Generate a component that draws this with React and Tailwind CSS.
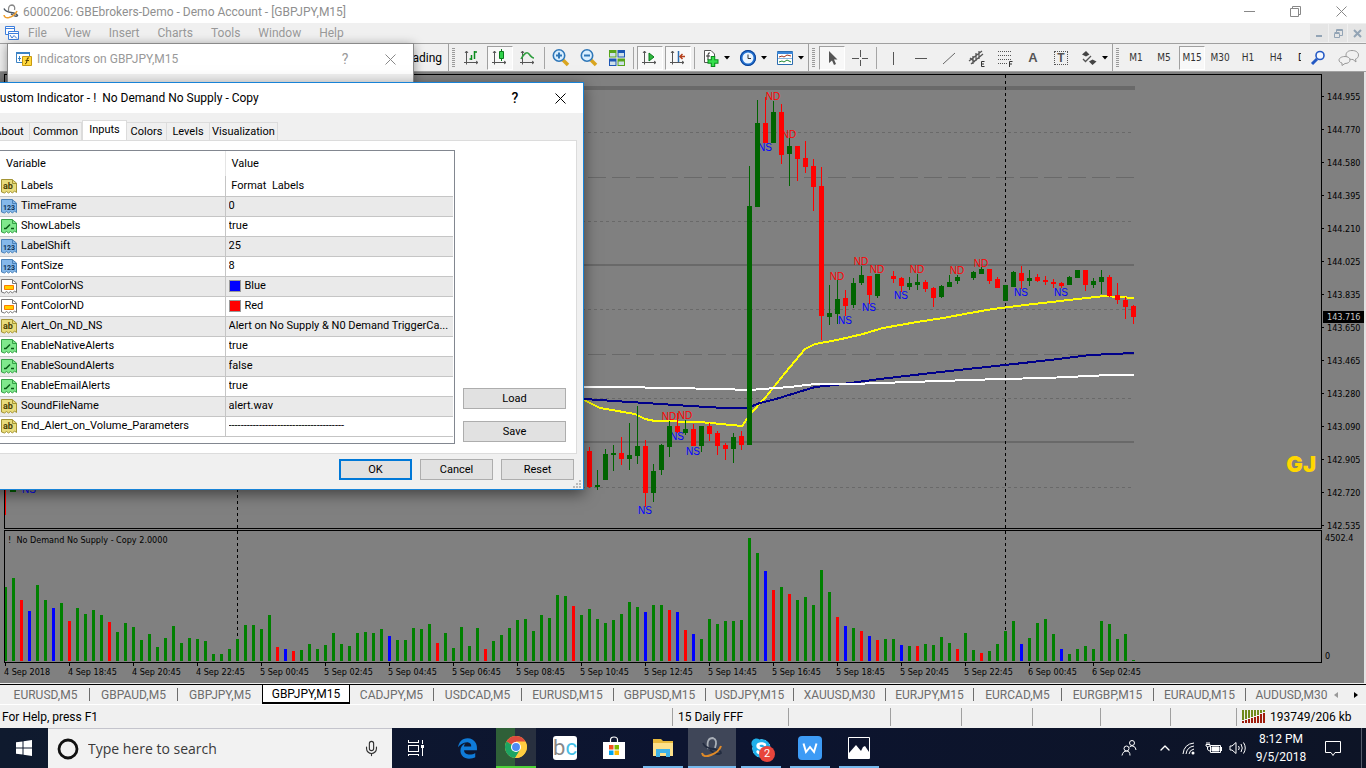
import { ChevronUp, Mic } from "lucide-react";
import { FaEdgeLegacy, FaSkype } from "react-icons/fa6";

// --- Data ---
const G = "#008000";
const R = "#ff0000";
const B = "#0000ff";
const BAR_COLORS = { g: G, r: R, b: B };
const FIRST_X = 5;
const STEP = 8;

const volumes =
  "g74 g83 r61 b50 g76 g61 b53 g58 r40 g53 g47 g51 g46 r39 g29 g38 g34 g21 g27 g14 g23 g35 g18 g23 g22 g20 g7 g7 g12 g22 " +
  "g36 g36 g32 g46 r14 b12 r10 g11 g17 g12 g16 g28 g17 g15 g28 g29 g28 g32 b25 g21 g21 g33 g32 g37 r18 g28 g13 g34 g15 g33 " +
  "r12 g20 g26 g33 g41 g42 g30 g46 g43 g66 g65 r55 g46 g52 g42 g38 g41 g47 g59 g54 b49 g56 g56 r51 b49 r31 b27 g22 g42 g37 " +
  "g40 g40 g41 g123 g108 b90 r71 g74 r67 g61 g64 g56 g91 g69 r44 b35 g33 r30 b25 r21 g22 g22 b16 g15 r15 g17 g16 g24 g18 r12 " +
  "g28 g11 r8 g10 g17 g30 g40 b17 g23 g38 g42 g27 b12 g7 g12 g15 g12 g40 g37 g22 g27 g1";

// [index, up/down, high, body top, body bottom, low]
const candles = [
  [73, 0, 447, 451, 487, 488], [74, 1, 470, 485, 487, 490], [75, 1, 449, 454, 480, 480], [76, 1, 445, 453, 455, 471],
  [77, 0, 437, 453, 459, 465], [78, 1, 423, 455, 459, 470], [79, 1, 406, 446, 456, 464], [80, 0, 440, 446, 493, 507],
  [81, 1, 464, 471, 493, 502], [82, 1, 444, 445, 470, 475], [83, 1, 421, 426, 447, 457], [84, 0, 413, 426, 432, 433],
  [85, 1, 420, 429, 433, 435], [86, 0, 424, 429, 446, 446], [87, 1, 426, 426, 446, 452], [88, 0, 423, 426, 434, 441],
  [89, 0, 431, 433, 446, 455], [90, 0, 443, 445, 449, 460], [91, 1, 433, 437, 449, 463], [92, 0, 431, 436, 445, 450],
  [93, 1, 166, 206, 445, 445], [94, 1, 100, 123, 207, 207], [95, 0, 97, 123, 143, 143], [96, 1, 101, 112, 143, 143],
  [97, 0, 104, 112, 155, 164], [98, 1, 138, 146, 154, 186], [99, 0, 146, 146, 159, 181], [100, 0, 141, 158, 167, 173],
  [101, 0, 159, 166, 187, 211], [102, 0, 167, 186, 316, 340], [103, 1, 285, 313, 317, 325], [104, 1, 280, 299, 314, 324],
  [105, 0, 290, 298, 306, 316], [106, 1, 278, 283, 305, 308], [107, 1, 266, 275, 283, 285], [108, 0, 276, 276, 295, 304],
  [109, 1, 274, 274, 296, 298], [111, 0, 271, 276, 279, 283], [112, 0, 277, 278, 286, 292], [113, 1, 277, 283, 287, 290],
  [114, 1, 274, 282, 285, 290], [115, 0, 280, 282, 289, 292], [116, 0, 287, 288, 298, 307], [117, 1, 285, 286, 297, 298],
  [118, 1, 275, 282, 287, 287], [119, 1, 275, 277, 281, 284], [121, 1, 271, 272, 278, 280], [122, 1, 267, 269, 274, 274],
  [123, 0, 269, 269, 281, 284], [124, 0, 277, 279, 288, 288], [125, 1, 285, 285, 301, 301], [126, 1, 271, 272, 287, 287],
  [127, 0, 266, 273, 281, 289], [128, 1, 270, 278, 281, 286], [129, 0, 274, 277, 281, 282], [130, 0, 276, 280, 282, 285],
  [131, 0, 279, 282, 284, 288], [132, 0, 282, 283, 286, 288], [133, 1, 276, 277, 285, 285], [134, 1, 270, 270, 278, 278],
  [135, 0, 270, 270, 285, 291], [136, 1, 278, 281, 285, 288], [137, 1, 270, 277, 282, 294], [138, 0, 275, 277, 296, 297],
  [139, 0, 283, 295, 300, 304], [140, 0, 297, 300, 307, 319], [141, 0, 305, 306, 317, 324],
];

const signals = [
  ["ND", 773, 96], ["ND", 789, 134], ["ND", 837, 276], ["ND", 861, 261], ["ND", 877, 269], ["ND", 917, 269],
  ["ND", 957, 270], ["ND", 981, 263], ["ND", 669, 416], ["ND", 685, 415],
  ["NS", 765, 147], ["NS", 845, 320], ["NS", 869, 307], ["NS", 901, 295], ["NS", 1021, 292], ["NS", 1061, 292],
  ["NS", 677, 436], ["NS", 693, 451], ["NS", 645, 510], ["NS", 29, 489],
];

const prices = ["144.955", "144.770", "144.580", "144.395", "144.210", "144.025", "143.835", "143.650", "143.465", "143.280", "143.090", "142.905", "142.720", "142.535"];

const times = ["4 Sep 2018", "4 Sep 18:45", "4 Sep 20:45", "4 Sep 22:45", "5 Sep 00:45", "5 Sep 02:45", "5 Sep 04:45", "5 Sep 06:45", "5 Sep 08:45", "5 Sep 10:45", "5 Sep 12:45", "5 Sep 14:45", "5 Sep 16:45", "5 Sep 18:45", "5 Sep 20:45", "5 Sep 22:45", "6 Sep 00:45", "6 Sep 02:45"];

const chartTabs = [
  ["EURUSD,M5", "w-[88px]"], ["GBPAUD,M5", "w-[88px]"], ["GBPJPY,M5", "w-[84px]"], ["GBPJPY,M15", "w-[88px]"], ["CADJPY,M5", "w-[84px]"],
  ["USDCAD,M5", "w-[88px]"], ["EURUSD,M15", "w-[92px]"], ["GBPUSD,M15", "w-[92px]"], ["USDJPY,M15", "w-[88px]"], ["XAUUSD,M30", "w-[92px]"],
  ["EURJPY,M15", "w-[88px]"], ["EURCAD,M5", "w-[88px]"], ["EURGBP,M15", "w-[92px]"], ["EURAUD,M15", "w-[92px]"], ["AUDUSD,M30", "w-[92px]"],
];

const inputs = [
  ["ab", "Labels", " Format  Labels"],
  ["123", "TimeFrame", "0"],
  ["bool", "ShowLabels", "true"],
  ["123", "LabelShift", "25"],
  ["123", "FontSize", "8"],
  ["color", "FontColorNS", "Blue"],
  ["color", "FontColorND", "Red"],
  ["ab", "Alert_On_ND_NS", "Alert on No Supply & N0 Demand TriggerCa..."],
  ["bool", "EnableNativeAlerts", "true"],
  ["bool", "EnableSoundAlerts", "false"],
  ["bool", "EnableEmailAlerts", "true"],
  ["ab", "SoundFileName", "alert.wav"],
  ["ab", "End_Alert_on_Volume_Parameters", "--------------------------------------"],
];

const UI = "font-['Roboto','Noto_Sans',sans-serif]";
const CHART = "font-['DejaVu_Sans_Condensed','DejaVu_Sans',sans-serif]";

// --- Title bar and menu ---
function TitleBar() {
  return (
    <header className="flex h-[23px] shrink-0 items-center bg-white text-[#8f8f8f]">
      <svg className="ml-[3px] size-4" viewBox="0 0 16 16" fill="none">
        <path d="M5.500 7Q5 1 9 1Q12.500 1.500 11.500 6" stroke="#888" strokeWidth="1.300" />
        <path d="M1 4.500Q2 7.500 8 8.500Q14 9.500 14.500 11.500Q13 13.500 8 10" stroke="#4a5460" strokeWidth="1.400" />
        <path d="M1 11Q1.500 14.500 6 13.500Q11.500 12 14 7" stroke="#f0a030" strokeWidth="1.600" />
      </svg>
      <span className="ml-1 text-xs">6000206: GBEbrokers-Demo - Demo Account - [GBPJPY,M15]</span>
      <div className="mr-[2px] ml-auto flex">
        <button aria-label="Minimize" className="flex h-[22px] w-[46px] items-center justify-center">
          <svg width="11" height="11" stroke="#888" fill="none"><path d="M0 5.500H11" /></svg>
        </button>
        <button aria-label="Restore" className="flex h-[22px] w-[46px] items-center justify-center">
          <svg width="11" height="11" stroke="#888" fill="none"><path d="M0.500 2.500H8.500V10.500H0.500ZM2.500 2.500V0.500H10.500V8.500H8.500" /></svg>
        </button>
        <button aria-label="Close" className="flex h-[22px] w-[46px] items-center justify-center">
          <svg width="11" height="11" stroke="#888" fill="none"><path d="M0.500 0.500L10.500 10.500M10.500 0.500L0.500 10.500" /></svg>
        </button>
      </div>
    </header>
  );
}

function MenuBar() {
  return (
    <nav className="flex h-5 shrink-0 items-center bg-[#f0f0f0] text-xs text-[#999]">
      <svg className="ml-[5px] mr-[3px] size-[15px]" viewBox="0 0 15 15" fill="none" stroke="#3e7fdc">
        <path d="M0.500 0.500H9.500V8.500H0.500ZM0.500 2.500H9.500" fill="#fff" />
        <path d="M3.500 5.500H13.500V13.500H3.500ZM3.500 7.500H13.500" fill="#fff" />
        <path d="M5 9L7 12L9 9.500L12 12.500" />
      </svg>
      <button className="px-[5px] mr-2">File</button>
      <button className="px-[5px] mr-2">View</button>
      <button className="px-[5px] mr-2">Insert</button>
      <button className="px-[5px] mr-2">Charts</button>
      <button className="px-[5px] mr-2">Tools</button>
      <button className="px-[5px] mr-2">Window</button>
      <button className="px-[5px]">Help</button>
      <div className="ml-auto flex gap-px">
        <button aria-label="Minimize chart" className="flex h-[18px] w-[18px] items-center justify-center bg-[#e5e5e5]">
          <svg width="9" height="9"><path d="M1 7H7" stroke="#93a4b5" strokeWidth="2" /></svg>
        </button>
        <button aria-label="Restore chart" className="flex h-[18px] w-[18px] items-center justify-center bg-[#e5e5e5]">
          <svg width="9" height="9" fill="none" stroke="#93a4b5"><path d="M0.500 4.500H5.500V8.500H0.500ZM0.500 3.500H5.500M2.500 3V0.500H8.500V6.500H6M2.500 1.500H8.500" /></svg>
        </button>
        <button aria-label="Close chart" className="flex h-[18px] w-[18px] items-center justify-center bg-[#e5e5e5]">
          <svg width="9" height="9"><path d="M1 1L8 8M8 1L1 8" stroke="#93a4b5" strokeWidth="2" /></svg>
        </button>
      </div>
    </nav>
  );
}

// --- Toolbar ---
const AXES = "M4.500 3V16.500M2 14.500H16M3 5L4.500 3L6 5M14 13L16 14.500L14 16";

const toolIcons = {
  bars: (
    <>
      <path d={AXES} stroke="#555" />
      <path d="M9.500 7V12M7.500 11H10M12.500 3V11M12 4H15" stroke="#0a8a1c" strokeWidth="1.500" />
    </>
  ),
  candles: (
    <>
      <path d={AXES} stroke="#555" />
      <path d="M11.500 1V13" stroke="#0a7a1c" />
      <path d="M9.500 3.500H13.500V10.500H9.500Z" fill="#2fd14a" stroke="#0a7a1c" />
    </>
  ),
  line: (
    <>
      <path d={AXES} stroke="#555" />
      <path d="M3 11Q8 2 11 6T16 10" stroke="#2f9e3f" strokeWidth="1.500" />
    </>
  ),
  zoomin: (
    <>
      <path d="M12 12L17 17" stroke="#d9a520" strokeWidth="3.500" />
      <circle cx="8" cy="7.500" r="5.700" fill="#d9efff" stroke="#2f77b8" strokeWidth="1.600" />
      <path d="M5 7.500H11M8 4.500V10.500" stroke="#2f77b8" strokeWidth="2" />
    </>
  ),
  zoomout: (
    <>
      <path d="M12 12L17 17" stroke="#d9a520" strokeWidth="3.500" />
      <circle cx="8" cy="7.500" r="5.700" fill="#d9efff" stroke="#2f77b8" strokeWidth="1.600" />
      <path d="M5 7.500H11" stroke="#2f77b8" strokeWidth="2" />
    </>
  ),
  tiles: (
    <>
      <path d="M2 2H9.500V9.500H2ZM10.500 10.500H18V18H10.500Z" fill="#58a51c" />
      <path d="M10.500 2H18V9.500H10.500ZM2 10.500H9.500V18H2Z" fill="#1d57b5" />
      <path d="M3 5H8.500V8.500H3ZM11.500 13.500H17V17H11.500ZM11.500 5H17V8.500H11.500ZM3 13.500H8.500V17H3Z" fill="#cfe0ea" />
    </>
  ),
  scroll: (
    <>
      <path d={AXES} stroke="#555" />
      <path d="M9 5L14 9L9 13Z" fill="#2eb83e" stroke="#0a7a1c" />
    </>
  ),
  shift: (
    <>
      <path d={AXES} stroke="#555" />
      <path d="M10.500 3V14" stroke="#2b6cb0" strokeWidth="1.500" />
      <path d="M12 8.500H17M14.500 6L12 8.500L14.500 11" stroke="#b5401c" strokeWidth="1.500" />
    </>
  ),
  add: (
    <>
      <path d="M3.500 2.500H10L13.500 6V14.500H3.500Z" fill="#fff" stroke="#555" />
      <path d="M9 5Q7 4 7 7V12M5 8H9" stroke="#333" />
      <path d="M12 8V19M6.500 13.500H17.500" stroke="#0a8a1c" strokeWidth="4.500" />
      <path d="M12 9V18M7.500 13.500H16.500" stroke="#35e04c" strokeWidth="2.500" />
    </>
  ),
  clock: (
    <>
      <circle cx="10" cy="10" r="8" fill="#1f6fd0" />
      <circle cx="10" cy="10" r="7.500" stroke="#0d3f91" />
      <circle cx="10" cy="10" r="5.500" fill="#e9f4ff" />
      <path d="M10 6.500V10.500H13" stroke="#333" />
    </>
  ),
  template: (
    <>
      <path d="M2.500 3.500H17.500V16.500H2.500Z" fill="#fff" stroke="#2b6cb0" />
      <path d="M2 4H18V6H2Z" fill="#3a86d8" />
      <path d="M4 9L7 8L9 9L12 7L16 8" stroke="#a0341c" />
      <path d="M3 10.500H17" stroke="#8bb4dd" />
      <path d="M4 14L7 13L9 14L12 12L16 14" stroke="#1f8a33" />
    </>
  ),
  cursor: <path d="M7 3V15L10 12.500L12 17L14 16L12 11.500H15.500Z" fill="#555" />,
  cross: <path d="M10.500 2V9M10.500 12V18M2 10.500H9M12 10.500H18" stroke="#555" />,
  vline: <path d="M10.500 4V17" stroke="#555" />,
  hline: <path d="M4 10.500H16" stroke="#555" />,
  trend: <path d="M4 16L16 5" stroke="#666" />,
  channel: (
    <>
      <path d="M2 13L15 3M4 16L16 6M6 8V16M9 5V13M12 3V11M3 10L8 14" stroke="#555" strokeWidth="1.300" />
      <path d="M17.500 13.500H14.500V18.500H17.500M14.500 16H17" stroke="#333" />
    </>
  ),
  fibo: (
    <>
      <path d="M3 3.500H17M3 7.500H17M3 11.500H17M3 15.500H12" stroke="#555" strokeDasharray="1 1" />
      <path d="M17.500 13.500H14.500V19M14.500 16H17" stroke="#333" />
    </>
  ),
  arrows: (
    <>
      <path d="M7 3L10.500 6.500L7 8.500L3 6.500ZM13.500 17L10 13.500L13.500 11.500L17.500 13.500Z" fill="#444" />
      <path d="M4 11L6.500 13.500L12 8" stroke="#555" strokeWidth="1.300" />
    </>
  ),
};

function Tool({ name, pressed }) {
  return (
    <button
      aria-label={name}
      className={`mx-px flex h-6 w-[26px] shrink-0 items-center justify-center border ${pressed ? "border-[#a0a0a0] border-r-white border-b-white bg-[#f8f8f8]" : "border-transparent"}`}
    >
      <svg className="size-5 shrink-0" viewBox="0 0 20 20" fill="none">{toolIcons[name]}</svg>
    </button>
  );
}

function MenuTool({ name }) {
  return (
    <button aria-label={name} className="flex h-6 w-[37px] shrink-0 items-center pl-1">
      <svg className="size-5" viewBox="0 0 20 20" fill="none">{toolIcons[name]}</svg>
      <svg className="ml-[3px]" width="6" height="4"><path d="M0 0H6L3 3.500Z" fill="#000" /></svg>
    </button>
  );
}

function Sep() {
  return <div className="mx-[2px] h-[22px] w-px shrink-0 bg-[#a5a5a5]" />;
}

function Grip() {
  return (
    <div className="flex shrink-0 items-center border-l border-[#a0a0a0] px-[3px]">
      <svg width="3" height="20"><path d="M1.500 0V20" stroke="#9a9a9a" strokeWidth="3" strokeDasharray="1 1" /></svg>
    </div>
  );
}

function Period({ children, pressed }) {
  return (
    <button
      className={`mx-px h-[24px] w-[26px] shrink-0 border text-center text-[10px] text-[#333] ${pressed ? "border-[#a0a0a0] border-r-white border-b-white bg-[#f8f8f8]" : "border-transparent"}`}
    >
      {children}
    </button>
  );
}

function Toolbar() {
  return (
    <div className="flex h-[29px] shrink-0 items-stretch overflow-hidden border-t border-b border-[#a0a0a0] bg-[#f0f0f0]">
      <div className="flex w-[448px] shrink-0 items-center justify-end pr-[6px] text-xs">
        <button>AutoTrading</button>
      </div>
      <Grip />
      <div className="flex items-center">
        <Tool name="bars" />
        <Tool name="candles" pressed />
        <Tool name="line" />
        <Sep />
        <Tool name="zoomin" />
        <Tool name="zoomout" />
        <Tool name="tiles" />
        <Sep />
        <Tool name="scroll" pressed />
        <Tool name="shift" pressed />
        <Sep />
        <MenuTool name="add" />
        <MenuTool name="clock" />
        <MenuTool name="template" />
      </div>
      <Grip />
      <div className="flex items-center">
        <Tool name="cursor" pressed />
        <Tool name="cross" />
        <Sep />
        <Tool name="vline" />
        <Tool name="hline" />
        <Tool name="trend" />
        <Tool name="channel" />
        <Tool name="fibo" />
        <button className="w-7 text-center font-['Liberation_Sans',sans-serif] text-[13px] font-bold text-[#555]">A</button>
        <button className="mx-[7px] h-[14px] w-[14px] border border-dotted border-[#555] text-center font-['Liberation_Sans',sans-serif] text-xs leading-3 font-bold text-[#555]">T</button>
        <MenuTool name="arrows" />
      </div>
      <Grip />
      <div className={`flex min-w-0 flex-1 items-center overflow-hidden ${CHART}`}>
        <Period>M1</Period>
        <Period>M5</Period>
        <Period pressed>M15</Period>
        <Period>M30</Period>
        <Period>H1</Period>
        <Period>H4</Period>
        <button className="ml-2 w-[3px] shrink-0 overflow-hidden text-[10px]">D1</button>
      </div>
      <div className="flex shrink-0 items-center">
        <button aria-label="Search" className="mr-3">
          <svg className="size-4" viewBox="0 0 16 16" fill="none">
            <path d="M7 9L2 14" stroke="#2459c4" strokeWidth="3" />
            <circle cx="10" cy="5.500" r="4" fill="#f4f8ff" stroke="#2459c4" strokeWidth="1.600" />
          </svg>
        </button>
        <button aria-label="Chat" className="mr-[6px]">
          <svg width="22" height="18" viewBox="0 0 22 18" fill="#f1f1f1" stroke="#999">
            <path d="M14 1.500C18 1.500 20.500 3.500 20.500 6S19 9.500 17.500 10L18 13L15 10.500C10 10.500 8 8.500 8 6S10 1.500 14 1.500Z" />
            <path d="M7 7.500C10 7.500 12 9 12 11S10 14.500 7 14.500L4 16.500V14C2 13.500 1 12.500 1 11S3 7.500 7 7.500Z" />
          </svg>
        </button>
      </div>
    </div>
  );
}

// --- Price and volume panels ---
function PricePlot() {
  return (
    <svg className="block h-[453px] w-full" role="img" aria-label="GBPJPY M15 price">
      <g transform="translate(-5 -75)">
        <g stroke="#696969" strokeWidth="1" fill="none" shapeRendering="crispEdges">
          <path d="M5 88H1135" strokeWidth="4" />
          <path d="M5 265H1134M5 442H1134" strokeWidth="2" />
          <path d="M6 132.500H1134M6 221.500H1134M6 309.500H1134M6 398.500H1134M6 487.500H1134" strokeDasharray="3 3" />
          <path d="M12 177.500H1134M12 354.500H1134" strokeDasharray="18 6" />
        </g>
        <path d="M237.500 75V528M1005.500 75V528" stroke="#000" strokeDasharray="3 3" shapeRendering="crispEdges" />
        <path d="M5.500 489V515" stroke={R} shapeRendering="crispEdges" />
        <path d="M10 489H16V492H10Z" fill="#006400" />
        <g fill="none" strokeWidth="2" shapeRendering="crispEdges">
          <path d="M584 400L600 408L635 414L645 419L655 421L700 422L742 426L752 412L765 398L785 373L805 349L815 344L837 340L863 334L883 328L917 322L943 318L970 313L993 309L1025 305L1060 301L1105 296L1134 298" stroke="#ffff00" />
          <path d="M584 399L630 402L690 406L725 408L747 408L760 403L776 399L815 387L835 385L880 379L940 372L1005 365L1050 360L1090 355L1134 353" stroke="#00008b" />
          <path d="M584 387L620 387L670 388L720 389L749 390L790 387L815 384L850 384L880 383L940 381L1000 379L1046 378L1110 375L1134 375" stroke="#fff" />
        </g>
        <g className="font-['Liberation_Sans',sans-serif] text-[10px]" textAnchor="middle">
          {signals.map(([t, x, y], i) => (
            <text key={i} x={x} y={y + 4} fill={t === "ND" ? R : B}>{t}</text>
          ))}
        </g>
        <g shapeRendering="crispEdges">
          {candles.map(([i, up, hi, top, bottom, lo]) => {
            const x = FIRST_X + STEP * i;
            return (
              <g key={i} fill={up ? "#006400" : R}>
                <rect x={x} y={hi} width="1" height={lo - hi} />
                <rect x={x - 2} y={top} width="5" height={Math.max(bottom - top, 1)} />
              </g>
            );
          })}
        </g>
      </g>
    </svg>
  );
}

function VolumePlot() {
  return (
    <svg className="block h-[131px] w-full" role="img" aria-label="Volume" shapeRendering="crispEdges">
      <path d="M232.500 0V109M1000.500 0V100" stroke="#000" strokeDasharray="3 3" />
      {volumes.split(" ").map((v, i) => {
        const h = Number(v.slice(1));
        return <rect key={i} x={STEP * i - 1} y={130 - h} width="3" height={h} fill={BAR_COLORS[v[0]]} />;
      })}
    </svg>
  );
}

function Chart() {
  return (
    <main className={`flex flex-1 flex-col overflow-hidden border-r-2 border-[#e3e3e3] bg-[#808080] pt-[2px] pl-1 text-[9px] leading-3 ${CHART}`}>
      <div className="flex shrink-0">
        <div className="relative min-w-0 flex-1 overflow-hidden border border-black">
          <PricePlot />
          <span className="absolute right-[5px] bottom-[52px] font-['Inter',sans-serif] text-[22px] leading-6 font-black text-[#ffd700]">GJ</span>
        </div>
        <div className="relative h-[455px] w-[42px] shrink-0 pt-[6px]">
          {prices.map((p) => (
            <div key={p} className="flex h-[33px] items-center gap-[3px]">
              <i className="h-px w-[2px] bg-black" />
              {p}
            </div>
          ))}
          <div className="absolute top-[237px] right-0 left-px bg-black pl-1 text-[#c8c8c8]">143.716</div>
        </div>
      </div>
      <div className="mt-px flex shrink-0">
        <div className="relative min-w-0 flex-1 overflow-hidden border border-black">
          <VolumePlot />
          <span className="absolute top-[3px] left-[3px] whitespace-pre">!  No Demand No Supply - Copy 2.0000</span>
        </div>
        <div className="flex w-[42px] shrink-0 flex-col justify-between pt-[2px] pb-px pl-[3px]">
          <span>4502.4</span>
          <span>0</span>
        </div>
      </div>
      <div className="flex shrink-0">
        {times.map((t) => (
          <div key={t} className="w-16 shrink-0 whitespace-nowrap">
            <i className="ml-px block h-[3px] w-px bg-black" />
            {t}
          </div>
        ))}
      </div>
    </main>
  );
}

// --- Bottom rows ---
function ChartTabs() {
  return (
    <div className="flex h-[22px] shrink-0 border-b border-white bg-[#f0f0f0] pt-px text-xs text-[#6d6d6d]">
      <div className="flex min-w-0 flex-1 overflow-hidden border-t border-black pl-[2px]" role="tablist">
        {chartTabs.map(([name, width]) => {
          const active = name === "GBPJPY,M15";
          return (
            <button
              key={name}
              role="tab"
              aria-selected={active}
              className={`flex h-[19px] shrink-0 items-center justify-center ${width} ${active ? "border-x border-b-2 border-black bg-white text-black" : ""}`}
            >
              <span className="flex-1 whitespace-nowrap">{name}</span>
              {!active && name !== "GBPJPY,M5" && <i className="h-[13px] w-px bg-[#6d6d6d]" />}
            </button>
          );
        })}
      </div>
      <div className="flex w-[38px] items-center justify-between border-t border-black pr-2 pl-[6px]">
        <button aria-label="Scroll left"><svg width="4" height="6"><path d="M4 0V6L0 3Z" fill="#999" /></svg></button>
        <button aria-label="Scroll right"><svg width="4" height="6"><path d="M0 0V6L4 3Z" fill="#000" /></svg></button>
      </div>
    </div>
  );
}

function StatusBar() {
  const cell = "h-[18px] shrink-0 border-l border-[#a0a0a0]";
  return (
    <footer className="flex h-[23px] shrink-0 items-center bg-[#f0f0f0] text-xs leading-[18px]">
      <span className="flex-1 pl-[2px]">For Help, press F1</span>
      <span className={`${cell} w-[116px] pl-[5px]`}>15 Daily FFF</span>
      <span className={`${cell} w-[102px]`} />
      <span className={`${cell} w-[71px]`} />
      <span className={`${cell} w-[71px]`} />
      <span className={`${cell} w-[68px]`} />
      <span className={`${cell} w-[70px]`} />
      <span className={`${cell} w-[66px]`} />
      <span className={`${cell} flex w-[130px] items-center gap-1 pl-[5px] whitespace-nowrap`}>
        <svg width="24" height="13">
          <path d="M1 0V10M4 0V9M7 0V8M10 0V7M13 0V6M16 0V5M19 0V3M22 0V2" stroke="#6f8a1c" strokeWidth="2" />
          <path d="M1 11V13M4 10V13M7 9V13M10 8V13M13 7V13M16 6V13M19 4V13M22 3V13" stroke="#a01c0c" strokeWidth="2" />
        </svg>
        193749/206 kb
      </span>
    </footer>
  );
}

// --- Dialogs ---
function IndicatorsWindow() {
  return (
    <section className="absolute top-[43px] left-[7px] h-[420px] w-[407px] border border-[#8a8a8a] bg-[#f0f0f0] text-xs text-[#999] shadow-[0_2px_10px_rgba(0,0,0,0.4)]">
      <div className="flex h-[30px] items-center bg-white pr-px pl-2">
        <svg className="size-4" viewBox="0 0 16 16" fill="none">
          <path d="M0.500 1.500H13.500V11.500H0.500Z" fill="#fff" stroke="#3b82c4" />
          <path d="M0 1H14V3H0Z" fill="#3b82c4" />
          <path d="M3.500 5V10M2 7.500H5" stroke="#3b82c4" />
          <path d="M6.500 5.500H15.500V14.500H6.500Z" fill="#ffd83d" stroke="#c89a10" />
          <path d="M13 7Q11 6 11 9Q11 13 9 13M9.500 9.500H13" stroke="#5a4300" />
        </svg>
        <span className="ml-[5px]">Indicators on GBPJPY,M15</span>
        <button aria-label="Help" className="ml-auto w-[46px] text-sm">?</button>
        <button aria-label="Close" className="flex w-[44px] justify-center">
          <svg width="11" height="11" stroke="#888"><path d="M0.500 0.500L10.500 10.500M10.500 0.500L0.500 10.500" /></svg>
        </button>
      </div>
    </section>
  );
}

const PAGE = "M0.500 1.500H11L15.500 5V14.500L13.500 13L11.500 15L9.500 13.500L7.500 15L5.500 13.500L3.500 15L0.500 14Z";

function TypeIcon({ type }) {
  const skin = { ab: ["#e9dc7c", "#a39434"], 123: ["#85b8ea", "#4b82b8"], bool: ["#7fe88c", "#35a046"], color: ["#fff", "#777"] }[type];
  return (
    <svg className="size-4 shrink-0" viewBox="0 0 16 16" fill="none">
      <path d={PAGE} fill={skin[0]} stroke={skin[1]} />
      <path d="M11.500 1.500V5.500H15.500" stroke={skin[1]} />
      {type === "ab" && <text x="2" y="11" fontSize="9" fontWeight="bold" fill="#4a4208">ab</text>}
      {type === "123" && <text x="2" y="12" fontSize="7" fontWeight="bold" fill="#0d3358">123</text>}
      {type === "bool" && <path d="M3 10.500H5L9 6.500M10 10.500H13" stroke="#0a5a18" strokeWidth="1.500" />}
      {type === "color" && <path d="M3.500 7.500H12.500V11.500H3.500Z" fill="#ffd000" stroke="#ff7a00" />}
    </svg>
  );
}

function DialogTab({ children, active, className }) {
  return (
    <button
      role="tab"
      aria-selected={!!active}
      className={`shrink-0 border-r border-[#dcdcdc] text-center ${active ? "-mb-px h-[21px] border-t border-l bg-white pb-[2px]" : "h-[18px] border-t"} ${className}`}
    >
      {children}
    </button>
  );
}

function DialogButton({ children, primary, className }) {
  return (
    <button className={`h-[21px] bg-[#e1e1e1] text-center ${primary ? "border-2 border-[#0078d7]" : "border border-[#adadad]"} ${className}`}>
      {children}
    </button>
  );
}

function InputsDialog() {
  return (
    <section
      role="dialog"
      aria-label="Custom Indicator"
      className="absolute top-[82px] -left-5 flex h-[408px] w-[604px] flex-col border border-[#1883d7] bg-[#f0f0f0] text-[11px] leading-4 text-black shadow-[0_4px_14px_rgba(0,0,0,0.5)]"
    >
      <div className="flex h-[30px] shrink-0 items-center bg-white pr-px text-xs">
        <span className="ml-[11px] whitespace-pre">Custom Indicator - !  No Demand No Supply - Copy</span>
        <button aria-label="Help" className="ml-auto w-[46px] text-sm font-medium">?</button>
        <button aria-label="Close" className="flex w-[44px] justify-center">
          <svg width="11" height="11" stroke="#000"><path d="M0.500 0.500L10.500 10.500M10.500 0.500L0.500 10.500" /></svg>
        </button>
      </div>
      <div className="flex h-[27px] shrink-0 items-end" role="tablist">
        <DialogTab className="w-[49px] pl-2">About</DialogTab>
        <DialogTab className="w-[52px]">Common</DialogTab>
        <DialogTab active className="w-[45px]">Inputs</DialogTab>
        <DialogTab className="w-[40px]">Colors</DialogTab>
        <DialogTab className="w-[43px]">Levels</DialogTab>
        <DialogTab className="w-[68px]">Visualization</DialogTab>
      </div>
      <div className="mr-[6px] flex h-[314px] shrink-0 items-end border border-l-0 border-[#dcdcdc] bg-white pb-[9px]">
        <div className="h-[294px] w-[474px] border border-l-0 border-[#828790] pr-px">
          <table className="w-full table-fixed border-collapse text-left">
            <thead>
              <tr className="h-[25px]">
                <th className="w-[244px] border-r border-[#e5e5e5] pl-[25px] font-normal">Variable</th>
                <th className="pl-[6px] font-normal">Value</th>
              </tr>
            </thead>
            <tbody>
              {inputs.map(([type, name, value], i) => (
                <tr key={name} className={`h-5 border-b border-[#c5c5c5] ${i % 2 ? "bg-[#eaeaea]" : "bg-white"}`}>
                  <td className="border-r border-[#c5c5c5] p-0 pl-5">
                    <div className="flex items-center gap-1"><TypeIcon type={type} />{name}</div>
                  </td>
                  <td className="p-0 pl-[3px]">
                    <div className="flex items-center gap-1 overflow-hidden whitespace-pre">
                      {type === "color" && (
                        <i className={`h-3 w-3 border border-[#999] ${value === "Blue" ? "bg-[#0000ff]" : "bg-[#ff0000]"}`} />
                      )}
                      {value}
                    </div>
                  </td>
                </tr>
              ))}
            </tbody>
          </table>
        </div>
        <div className="mb-[2px] ml-2 flex flex-col gap-3">
          <DialogButton className="w-[103px]">Load</DialogButton>
          <DialogButton className="w-[103px]">Save</DialogButton>
        </div>
      </div>
      <div className="relative mt-[5px] flex justify-end gap-2 pr-[9px]">
        <DialogButton primary className="w-[73px]">OK</DialogButton>
        <DialogButton className="w-[73px]">Cancel</DialogButton>
        <DialogButton className="w-[73px]">Reset</DialogButton>
        <svg className="absolute -bottom-2 right-[2px]" width="8" height="8" fill="#bbb">
          <path d="M6 0h2v2h-2zM3 3h2v2h-2zM6 3h2v2h-2zM0 6h2v2h-2zM3 6h2v2h-2zM6 6h2v2h-2z" />
        </svg>
      </div>
    </section>
  );
}

// --- Taskbar ---
function TaskButton({ label, open, active, children }) {
  return (
    <button aria-label={label} className={`relative flex h-10 w-12 shrink-0 items-center justify-center ${active ? "bg-[#3f4658]" : ""}`}>
      {children}
      {open && <i className={`absolute bottom-0 h-[2px] bg-[#76b9ed] ${active ? "w-12" : "w-10"}`} />}
    </button>
  );
}

function Taskbar() {
  return (
    <footer className="flex h-10 shrink-0 items-center bg-linear-to-r from-[#0f1a2e] via-[#0c1430] to-[#0d1426] text-white">
      <button aria-label="Start" className="flex h-10 w-12 shrink-0 items-center justify-center">
        <svg width="16" height="16" fill="#fff"><path d="M0 2.300L6.500 1.400V7.500H0ZM7.500 1.200L16 0V7.500H7.500ZM0 8.500H6.500V14.600L0 13.700ZM7.500 8.500H16V16L7.500 14.800Z" /></svg>
      </button>
      <label className="flex h-10 w-[344px] shrink-0 items-center border-t border-[#c4c4cc] bg-[#f2f2f2] pl-2 text-[#333]">
        <svg className="size-6" viewBox="0 0 24 24" fill="none"><circle cx="12" cy="12" r="9" stroke="#111" strokeWidth="2.800" /></svg>
        <input
          aria-label="Search"
          placeholder="Type here to search"
          className="ml-2 min-w-0 flex-1 bg-transparent font-['Open_Sans','Noto_Sans',sans-serif] text-sm outline-none placeholder:text-[#3a3a3a]"
        />
        <Mic className="mr-3 size-[17px]" strokeWidth={1.6} />
      </label>
      <TaskButton label="Task view">
        <svg width="16" height="16" fill="none" stroke="#fff" shapeRendering="crispEdges">
          <path d="M0.500 0V2.500H10.500V0M0.500 5.500H10.500V11.500H0.500ZM0.500 16V14.500H10.500V16M14.500 0V4M14.500 8V16" />
          <path d="M13 5h3v3h-3z" fill="#fff" stroke="none" />
        </svg>
      </TaskButton>
      <div className="ml-[3px] flex gap-px">
        <TaskButton label="Edge"><FaEdgeLegacy className="size-[21px] text-[#0f7bd8]" /></TaskButton>
        <button aria-label="Chrome" className="relative mx-1 flex h-10 w-10 items-center justify-center border-b-2 border-[#4cd137] bg-[linear-gradient(to_right,#2f6038_48%,#28303f_48%)]">
          <svg className="size-[22px]" viewBox="0 0 24 24">
            <circle cx="12" cy="12" r="12" fill="#ffcd40" />
            <path d="M12 12L1.600 6A12 12 0 0 1 22.400 6H12Z" fill="#dd4b3e" />
            <path d="M12 12L1.600 6A12 12 0 0 0 11 24L17 15Z" fill="#1da462" />
            <path d="M12 6.500H22.400A12 12 0 0 1 11 24L17 14Z" fill="#ffcd40" />
            <circle cx="12" cy="12" r="5.500" fill="#fff" />
            <circle cx="12" cy="12" r="4.300" fill="#4c8bf5" />
          </svg>
        </button>
        <TaskButton label="bc">
          <span className="flex size-6 items-center justify-center rounded-[3px] bg-white text-[22px] leading-6 text-[#888]">
            b<span className="text-[#45bfe6]">c</span>
          </span>
        </TaskButton>
        <TaskButton label="Store">
          <svg width="24" height="24" fill="none">
            <path d="M8.500 7V4Q8.500 1 12 1T15.500 4V7" stroke="#fff" strokeWidth="1.200" />
            <path d="M1 6H23V23H1Z" fill="#fff" />
            <path d="M7 9h4.500v4.500H7z" fill="#f25022" /><path d="M12.500 9H17v4.500h-4.500z" fill="#7fba00" />
            <path d="M7 14.500h4.500V19H7z" fill="#00a4ef" /><path d="M12.500 14.500H17V19h-4.500z" fill="#ffb900" />
          </svg>
        </TaskButton>
        <TaskButton label="File Explorer" open>
          <svg width="22" height="20">
            <path d="M1 1H9L11 3H21V18H1Z" fill="#e8b93c" /><path d="M1 5H21V18H1Z" fill="#fde08a" />
            <path d="M4 11H18V19H14V15H8V19H4Z" fill="#3fb2e8" />
          </svg>
        </TaskButton>
        <TaskButton label="MetaTrader" open active>
          <svg width="24" height="24" fill="none">
            <path d="M8 13Q6 2 13 2Q18 4 15 12" stroke="#aab0b8" strokeWidth="1.800" />
            <path d="M3 7Q5 12 13 13T21 17Q17 20 10 14" stroke="#232c40" strokeWidth="1.800" />
            <path d="M2 17Q3 22 11 19T21 10" stroke="#e08a28" strokeWidth="2" />
          </svg>
        </TaskButton>
        <TaskButton label="Skype" open>
          <FaSkype className="size-[23px] bg-[radial-gradient(circle,#fff_55%,transparent_56%)] text-[#1fb0ea]" />
          <span className="absolute top-[18px] left-[22px] size-4 rounded-full bg-[#e8453c] text-center text-[11px] leading-4">2</span>
        </TaskButton>
        <TaskButton label="WPS" open>
          <svg width="24" height="24"><rect width="24" height="24" rx="4" fill="#3d9bf5" /><path d="M5.500 7.500L8 16L12 11L16 16L18.500 7.500" fill="none" stroke="#fff" strokeWidth="2" /></svg>
        </TaskButton>
        <TaskButton label="Photos" open>
          <svg width="22" height="22"><path d="M0.500 0.500H21.500V21.500H0.500Z" stroke="#fff" fill="none" /><path d="M1 16L8 8L13 14L15 10L17 9L21 15V21H1Z" fill="#fff" /></svg>
        </TaskButton>
      </div>
      <div className="ml-auto flex items-center">
        <button aria-label="People">
          <svg width="16" height="16" fill="none" stroke="#fff"><circle cx="5.500" cy="8.500" r="2.500" /><path d="M1 15.500Q2 11 5.500 11T9 15.500" /><circle cx="11" cy="3" r="2.500" /><path d="M8.500 7Q10 5.500 12 6Q15 7 15 10" /></svg>
        </button>
        <button aria-label="Show hidden icons" className="ml-5"><ChevronUp className="size-4" strokeWidth={2} /></button>
        <button aria-label="Network" className="ml-2">
          <svg width="16" height="16" fill="none" stroke="#fff"><path d="M2 14Q3 4 13 3M5 14Q6 7 13 6M8 14Q8.500 10 13 9" /><circle cx="12" cy="13" r="1.500" fill="#fff" stroke="none" /></svg>
        </button>
        <button aria-label="Battery" className="ml-2">
          <svg width="18" height="14" fill="none" stroke="#fff"><path d="M5.500 4.500H15.500V11.500H5.500ZM16.500 6V10M2.500 6V8Q3 10 5 10M1 3.500H5V5Q3 7 1 5ZM2 1V3M4 1V3" /><path d="M7 6H14V10H7Z" fill="#fff" /></svg>
        </button>
        <button aria-label="Volume" className="ml-[6px]">
          <svg width="18" height="14" fill="none" stroke="#fff"><path d="M1 5H3L7 1.500V12.500L3 9H1ZM9.500 5Q11 7 9.500 9M12 3Q14.500 7 12 11M14.500 1.500Q18 7 14.500 12.500" /></svg>
        </button>
        <div className="ml-1 w-[60px] text-center text-xs leading-[18px]">
          <div>8:12 PM</div>
          <div>9/5/2018</div>
        </div>
        <button aria-label="Notifications" className="ml-[14px]">
          <svg width="16" height="17" fill="none" stroke="#fff"><path d="M0.500 1.500H15.500V12.500H10L8 15.500L6 12.500H0.500Z" /></svg>
        </button>
        <div className="mr-1 ml-5 h-10 w-px bg-[#555c6b]" />
      </div>
    </footer>
  );
}

export default function App() {
  return (
    <div className={`relative flex h-screen flex-col overflow-hidden bg-[#f0f0f0] ${UI}`}>
      <TitleBar />
      <MenuBar />
      <Toolbar />
      <Chart />
      <ChartTabs />
      <StatusBar />
      <Taskbar />
      <IndicatorsWindow />
      <InputsDialog />
    </div>
  );
}
